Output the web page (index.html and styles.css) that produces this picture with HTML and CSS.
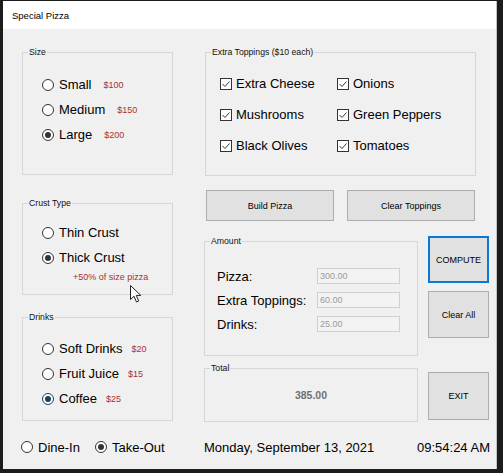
FILE: index.html
```html
<!DOCTYPE html>
<html>
<head>
<meta charset="utf-8">
<link rel="stylesheet" href="styles.css">
</head>
<body>
<div class="window">
  <div class="titlebar">Special Pizza</div>
  <div class="content">
    <div class="left">
      <div class="group size">
        <span class="legend">Size</span>
        <div class="opt"><span class="radio"></span><span class="lbl">Small</span><span class="price">$100</span></div>
        <div class="opt"><span class="radio"></span><span class="lbl">Medium</span><span class="price">$150</span></div>
        <div class="opt"><span class="radio on"></span><span class="lbl">Large</span><span class="price">$200</span></div>
      </div>
      <div class="group crust">
        <span class="legend">Crust Type</span>
        <div class="opt"><span class="radio"></span><span class="lbl">Thin Crust</span></div>
        <div class="opt"><span class="radio on"></span><span class="lbl">Thick Crust</span></div>
        <div class="note">+50% of size pizza</div>
      </div>
      <div class="group drinks">
        <span class="legend">Drinks</span>
        <div class="opt"><span class="radio"></span><span class="lbl">Soft Drinks</span><span class="price">$20</span></div>
        <div class="opt"><span class="radio"></span><span class="lbl">Fruit Juice</span><span class="price">$15</span></div>
        <div class="opt"><span class="radio on focus"></span><span class="lbl">Coffee</span><span class="price">$25</span></div>
      </div>
    </div>
    <div class="right">
      <div class="group toppings">
        <span class="legend">Extra Toppings ($10 each)</span>
        <div class="chk"><svg class="box" viewBox="0 0 12 12"><rect x="0.5" y="0.5" width="11" height="11" fill="#fff" stroke="#333"/><polyline points="2.5,6 5,8.5 9.5,3.5" fill="none" stroke="#333" stroke-width="1"/></svg><span class="lbl">Extra Cheese</span></div>
        <div class="chk"><svg class="box" viewBox="0 0 12 12"><rect x="0.5" y="0.5" width="11" height="11" fill="#fff" stroke="#333"/><polyline points="2.5,6 5,8.5 9.5,3.5" fill="none" stroke="#333" stroke-width="1"/></svg><span class="lbl">Onions</span></div>
        <div class="chk"><svg class="box" viewBox="0 0 12 12"><rect x="0.5" y="0.5" width="11" height="11" fill="#fff" stroke="#333"/><polyline points="2.5,6 5,8.5 9.5,3.5" fill="none" stroke="#333" stroke-width="1"/></svg><span class="lbl">Mushrooms</span></div>
        <div class="chk"><svg class="box" viewBox="0 0 12 12"><rect x="0.5" y="0.5" width="11" height="11" fill="#fff" stroke="#333"/><polyline points="2.5,6 5,8.5 9.5,3.5" fill="none" stroke="#333" stroke-width="1"/></svg><span class="lbl">Green Peppers</span></div>
        <div class="chk"><svg class="box" viewBox="0 0 12 12"><rect x="0.5" y="0.5" width="11" height="11" fill="#fff" stroke="#333"/><polyline points="2.5,6 5,8.5 9.5,3.5" fill="none" stroke="#333" stroke-width="1"/></svg><span class="lbl">Black Olives</span></div>
        <div class="chk"><svg class="box" viewBox="0 0 12 12"><rect x="0.5" y="0.5" width="11" height="11" fill="#fff" stroke="#333"/><polyline points="2.5,6 5,8.5 9.5,3.5" fill="none" stroke="#333" stroke-width="1"/></svg><span class="lbl">Tomatoes</span></div>
      </div>
      <div class="btnrow">
        <button class="btn wide">Build Pizza</button>
        <button class="btn wide">Clear Toppings</button>
      </div>
      <div class="lower">
        <div class="lower-left">
          <div class="group amount">
            <span class="legend">Amount</span>
            <span class="alabel">Pizza:</span><span class="tb">300.00</span>
            <span class="alabel">Extra Toppings:</span><span class="tb">60.00</span>
            <span class="alabel">Drinks:</span><span class="tb">25.00</span>
          </div>
          <div class="group total">
            <span class="legend">Total</span>
            <span class="totalval">385.00</span>
          </div>
        </div>
        <div class="lower-right">
          <button class="btn side compute">COMPUTE</button>
          <button class="btn side clearall">Clear All</button>
          <button class="btn side exit">EXIT</button>
        </div>
      </div>
    </div>
  </div>
  <div class="footer">
    <div class="service">
      <span class="radio"></span><span class="lbl">Dine-In</span>
      <span class="radio on takeout"></span><span class="lbl">Take-Out</span>
    </div>
    <div class="date">Monday, September 13, 2021</div>
    <div class="time">09:54:24 AM</div>
  </div>
  <svg class="cursor" width="13" height="19" viewBox="0 0 13 19"><polygon points="0.5,0.5 0.5,14.5 4,11.2 6.5,17 8.7,16 6.3,10.4 10.8,10.4" fill="#fff" stroke="#222" stroke-width="1" stroke-linejoin="round"/></svg>
</div>
</body>
</html>
```

FILE: styles.css
```css
body {
  margin: 0;
  background: #1c1c1c;
  font-family: "Liberation Sans", Arial, sans-serif;
  color: #000;
}

.window {
  margin: 1px 0 0 3px;
  width: 494px;
  height: 468px;
  background: #f0f0f0;
  border-right: 1px solid #c4c4c4;
  box-sizing: border-box;
  position: relative;
}

.titlebar {
  height: 28px;
  background: #fff;
  font-size: 9.5px;
  padding-left: 9px;
  display: flex;
  align-items: center;
}

.content {
  height: 408px;
  box-sizing: border-box;
  padding: 23px 0 0 19px;
  display: grid;
  grid-template-columns: 151px 285px;
  column-gap: 31px;
  align-items: start;
}

.group {
  position: relative;
  border: 1px solid #d6d6d6;
  box-sizing: border-box;
}

.legend {
  position: absolute;
  top: -6px;
  left: 5px;
  padding: 0 1px;
  background: #f0f0f0;
  font-size: 8.7px;
  line-height: 11px;
  color: #111;
  white-space: nowrap;
}

.size {
  height: 123px;
  padding: 19px 0 0 19px;
}

.crust {
  margin-top: 28px;
  height: 92px;
  padding: 16px 0 0 19px;
}

.drinks {
  margin-top: 22px;
  height: 104px;
  padding: 18px 0 0 19px;
}

.opt {
  display: flex;
  align-items: center;
  height: 25px;
}

.radio {
  width: 12px;
  height: 12px;
  border: 1px solid #333;
  border-radius: 50%;
  background: #fff;
  box-sizing: border-box;
  flex: none;
  display: grid;
  place-items: center;
}

.radio.on::after {
  content: "";
  width: 6px;
  height: 6px;
  border-radius: 50%;
  background: #333;
}

.radio.focus {
  border-color: #1d3f60;
}

.radio.focus::after {
  background: #1d3f60;
}

.lbl {
  font-size: 13px;
  margin-left: 5px;
  white-space: nowrap;
}

.price {
  font-size: 9px;
  color: #a83030;
  margin-left: 12px;
  padding-top: 1px;
}

.drinks .price {
  margin-left: 9px;
}

.note {
  font-size: 9px;
  color: #a83030;
  margin-left: 31px;
  line-height: 12px;
  margin-top: 1px;
}

.toppings {
  margin-left: 1px;
  width: 271px;
  height: 124px;
  padding: 15px 0 0 14px;
  display: grid;
  grid-template-columns: 117px auto;
  grid-auto-rows: 31px;
}

.chk {
  display: flex;
  align-items: center;
}

.chk .box {
  width: 12px;
  height: 12px;
  flex: none;
}

.chk .lbl {
  margin-left: 4px;
}

.btnrow {
  display: flex;
  gap: 13px;
  margin: 14px 0 0 2px;
}

.btn {
  font-family: inherit;
  font-size: 9px;
  background: #e1e1e1;
  border: 1px solid #adadad;
  color: #000;
  padding: 0;
  box-sizing: border-box;
}

.btn.wide {
  width: 128px;
  height: 31px;
}

.lower {
  display: grid;
  grid-template-columns: 214px 61px;
  column-gap: 10px;
  align-items: start;
}

.lower-left {
  padding-top: 20px;
  display: flex;
  flex-direction: column;
  gap: 12px;
}

.amount {
  height: 115px;
  padding: 26px 0 0 12px;
  display: grid;
  grid-template-columns: 100px 83px;
  grid-auto-rows: 16px;
  row-gap: 8px;
  align-items: center;
}

.alabel {
  font-size: 13px;
  white-space: nowrap;
}

.tb {
  height: 16px;
  border: 1px solid #d0d0d0;
  background: #f3f3f3;
  color: #9a9a9a;
  font-size: 9px;
  padding-left: 2px;
  display: flex;
  align-items: center;
  box-sizing: border-box;
}

.total {
  height: 54px;
  display: flex;
  align-items: center;
  justify-content: center;
}

.totalval {
  font-size: 10.5px;
  font-weight: bold;
  color: #707070;
}

.lower-right {
  padding-top: 15px;
  display: flex;
  flex-direction: column;
}

.btn.side {
  width: 61px;
  height: 47px;
}

.btn.compute {
  border: 2px solid #0a78d7;
}

.btn.clearall {
  margin-top: 8px;
}

.btn.exit {
  margin-top: 34px;
  height: 48px;
}

.footer {
  height: 20px;
  display: grid;
  grid-template-columns: 183px 213px auto;
  padding-left: 18px;
  align-items: center;
}

.service {
  display: flex;
  align-items: center;
}

.takeout {
  margin-left: 15px;
}

.date, .time {
  font-size: 13px;
  white-space: nowrap;
}

.cursor {
  position: absolute;
  left: 127px;
  top: 284px;
}
```
